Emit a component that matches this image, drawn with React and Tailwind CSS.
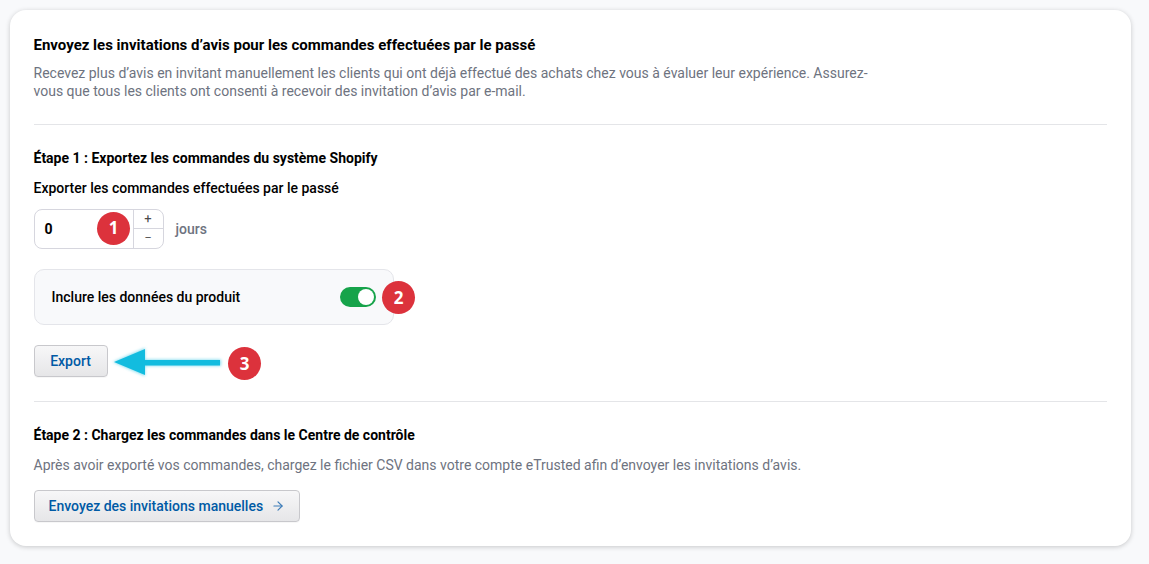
import React from "react";
import { ArrowRight } from "lucide-react";

function Badge({ n, className }) {
  return (
    <div className={"absolute w-[33px] h-[33px] rounded-full bg-[#dc323c] text-white flex items-center justify-center text-[17px] font-bold font-['Open_Sans',sans-serif] " + className}>
      {n}
    </div>
  );
}

const btn = "rounded-[4px] border border-[#c8c8cc] bg-gradient-to-b from-[#f7f7f8] to-[#e6e6e8] text-[#005aa5] font-medium text-[14px] flex items-center shadow-[0_1px_0_rgba(0,0,0,0.03)]";

export default function App() {
  return (
    <div className="w-[1149px] h-[564px] bg-[#f8f9fb] p-[10px] pr-[18px] overflow-hidden font-['Roboto',sans-serif] text-[14px]">
      <div className="relative w-[1121px] h-[536px] bg-white rounded-[16px] shadow-[0_1px_5px_rgba(0,0,0,0.2)] pl-[23.5px] pr-6 pt-[25px]">
        <h2 className="text-[15px] leading-5 font-bold text-[#000]">Envoyez les invitations d’avis pour les commandes effectuées par le passé</h2>
        <p className="mt-[9px] w-[850px] leading-[18px] text-[#6e7380]">
          Recevez plus d’avis en invitant manuellement les clients qui ont déjà effectué des achats chez vous à évaluer leur expérience. Assurez-vous que tous les clients ont consenti à recevoir des invitation d’avis par e-mail.
        </p>
        <hr className="mt-6 border-t border-[#e4e5e8]" />
        <h3 className="mt-[23px] leading-5 font-bold text-black">Étape 1 : Exportez les commandes du système Shopify</h3>
        <div className="mt-[10px] leading-5 font-medium text-black">Exporter les commandes effectuées par le passé</div>
        <div className="mt-[11px] flex items-center">
          <div className="flex w-[130px] h-[40px] rounded-[8px] border border-[#d6d6de] bg-white">
            <div className="flex-1 pl-[10px] flex items-center font-bold text-[14px] text-black">0</div>
            <div className="w-[30px] border-l border-[#d6d6de] flex flex-col text-[13px] text-[#4a4a4a]">
              <div className="h-[19px] pb-[1px] flex items-center justify-center border-b border-[#d6d6de]">+</div>
              <div className="flex-1 flex items-center justify-center text-[11px]">–</div>
            </div>
          </div>
          <span className="ml-3 text-[#6e7380] font-medium">jours</span>
        </div>
        <div className="mt-5 w-[360px] h-[56px] rounded-[10px] border border-[#e4e5ea] bg-[#f8f9fb] pl-[17px] pr-[17px] flex items-center justify-between">
          <span className="font-medium text-black">Inclure les données du produit</span>
          <div className="w-[36px] h-[20px] rounded-full bg-[#16a34a] flex items-center justify-end pr-[2px]">
            <div className="w-[16px] h-[16px] rounded-full bg-white" />
          </div>
        </div>
        <button className={btn + " mt-5 h-[32px] w-[74px] justify-center"}>Export</button>
        <hr className="mt-6 border-t border-[#e4e5e8]" />
        <h3 className="mt-[23px] leading-5 font-bold text-black">Étape 2 : Chargez les commandes dans le Centre de contrôle</h3>
        <p className="mt-[10px] leading-5 text-[#6e7380]">Après avoir exporté vos commandes, chargez le fichier CSV dans votre compte eTrusted afin d’envoyer les invitations d’avis.</p>
        <button className={btn + " mt-[15px] h-[32px] w-[266px] pl-[14px]"}>
          Envoyez des invitations manuelles
          <ArrowRight className="ml-[8px] w-[14px] h-[14px] text-[#3d7cb8]" strokeWidth={2} />
        </button>

        <Badge n="1" className="left-[87px] top-[201.5px]" />
        <Badge n="2" className="left-[372px] top-[271px]" />
        <Badge n="3" className="left-[218px] top-[337px]" />
        <svg className="absolute left-[100px] top-[334px]" width="114" height="36" viewBox="0 0 114 36">
          <path d="M3 18 L35 4 L35 15.5 L111 15.5 L111 22 L35 22 L35 32 Z" fill="#12bcdf" fillOpacity="0.5" style={{ filter: "blur(1.5px)" }} />
          <path d="M4 18 L35 5 L35 16 L110 16 L110 21.5 L35 21.5 L35 31 Z" fill="#12bcdf" style={{ filter: "blur(0.4px)" }} />
        </svg>
      </div>
    </div>
  );
}
